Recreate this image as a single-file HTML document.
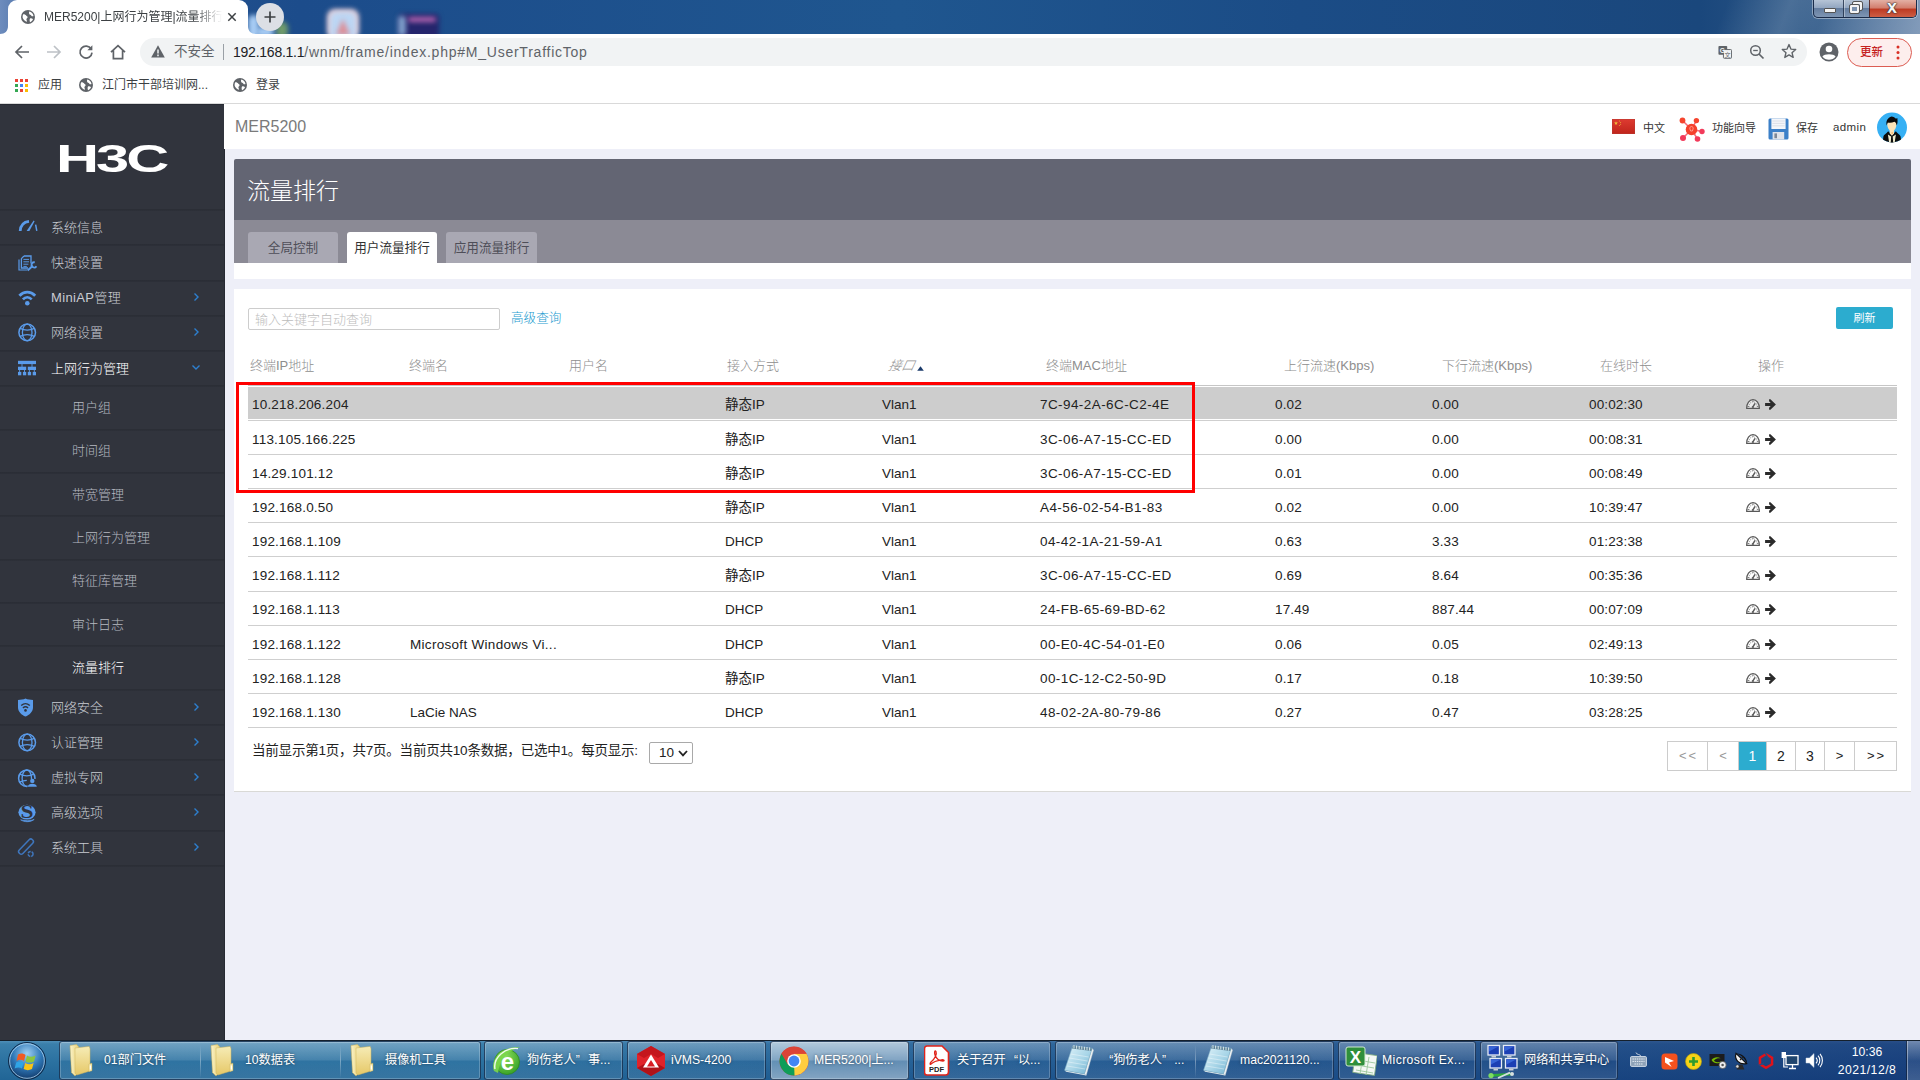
<!DOCTYPE html>
<html lang="zh-CN">
<head>
<meta charset="utf-8">
<title>MER5200|上网行为管理|流量排行</title>
<style>
*{box-sizing:border-box;margin:0;padding:0}
html,body{width:1920px;height:1080px;overflow:hidden;background:#eeeff8}
body{position:relative;font-family:"Liberation Sans","Noto Sans CJK SC",sans-serif;color:#222}
.abs{position:absolute}
.t{position:absolute;white-space:nowrap;line-height:16px}
svg{display:block}
/* ---------- window title bar ---------- */
#titlebar{position:absolute;left:0;top:0;width:1920px;height:34px;overflow:hidden;
 background:linear-gradient(90deg,#6d8cbd 0px,#27538f 60px,#1c4c8b 300px,#1f568f 900px,#1b4c86 1300px,#1a477c 1700px,#2a5585 1800px,#5f7fa6 1920px)}
#titlebar .blob{position:absolute;filter:blur(2.5px)}
#chrometab{position:absolute;left:8px;top:0px;width:240px;height:35px;background:#fff;border-radius:9px 9px 0 0}
#newtab{position:absolute;left:256px;top:3px;width:28px;height:28px;border-radius:14px;background:#dcdfe5}
#winbtn{position:absolute;left:1813px;top:0;width:104px;height:18px;border-radius:0 0 5px 5px;border:1px solid #1a2c4a;border-top:none;overflow:hidden;
 background:linear-gradient(180deg,#b6c4d6 0,#93a7c1 45%,#647d9f 50%,#7f96b4 100%);box-shadow:0 0 0 1px rgba(255,255,255,.4);z-index:2}
/* ---------- toolbar ---------- */
#toolbar{position:absolute;left:0;top:34px;width:1920px;height:36px;background:#fff}
#urlpill{position:absolute;left:140px;top:4px;width:1667px;height:28px;border-radius:14px;background:#f1f3f4}
#bookmarks{position:absolute;left:0;top:70px;width:1920px;height:34px;background:#fff;border-bottom:1px solid #d9d9d9}
#bookmarks .t{font-size:12px;color:#3c4043}
/* ---------- page ---------- */
#sidebar{position:absolute;left:0;top:104px;width:225px;height:936px;background:#31343d;border-right:1px solid #272a33;border-top:1px solid #272a33}
#sidebar .sep{position:absolute;left:0;width:224px;height:2px;background:linear-gradient(180deg,#2a2d35,#2d3039)}
#sidebar .mi{position:absolute;left:51px;font-size:13px;font-weight:300;color:#c9ccd3;line-height:16px;white-space:nowrap}
#sidebar .si{position:absolute;left:72px;font-size:13px;font-weight:300;color:#b6b9c1;line-height:16px;white-space:nowrap}
#sidebar .on{color:#fff}
#sidebar svg.ic{position:absolute;left:16px;width:22px;height:22px;overflow:visible}
#sidebar svg.ch{position:absolute;left:190.5px;width:10px;height:10px;overflow:visible}
#tophead{position:absolute;left:224px;top:104px;width:1696px;height:45px;background:#fff}
#tophead .t{font-size:11px;color:#333}
#phead{position:absolute;left:234px;top:159px;width:1677px;height:61px;background:#636573;border-radius:2px 2px 0 0}
#ptabs{position:absolute;left:234px;top:220px;width:1677px;height:43px;background:#8b8a95}
#ptabs .tab{position:absolute;top:12px;width:90px;height:33px;border-radius:3px 3px 0 0;background:#a9a8b3;color:#4e4e58;font-size:12.6px;line-height:32px;text-align:center;white-space:nowrap}
#ptabs .tab.on{background:#fff;color:#333}
#pstrip{position:absolute;left:234px;top:263px;width:1677px;height:16px;background:#fff}
#panel{position:absolute;left:234px;top:289px;width:1677px;height:503px;background:#fff;border-bottom:1px solid #d9d9d6}
#panel .th{position:absolute;top:69px;font-size:13px;font-weight:300;color:#8e8e8e;line-height:16px;white-space:nowrap}
#panel .ln{position:absolute;left:14px;width:1649px;height:1px;background:#cfcfcf}
#panel .td{position:absolute;font-size:13.5px;color:#222;line-height:16px;white-space:nowrap}
#panel .pg{position:absolute;top:452px;height:30px;border:1px solid #ccc;border-left:none;font-size:14px;line-height:28px;text-align:center;color:#222;background:#fff}
/* ---------- taskbar ---------- */
#taskbar{position:absolute;left:0;top:1040px;width:1920px;height:40px;
 background:linear-gradient(180deg,#4f8fb8 0,#3a7fab 3px,#2c72a1 50%,#216596 100%);border-top:1px solid #15202c}
#taskbar .tb{position:absolute;top:0px;height:39px;border:1px solid rgba(20,40,70,.75);border-radius:3px;
 background:linear-gradient(180deg,rgba(255,255,255,.28) 0,rgba(255,255,255,.12) 48%,rgba(255,255,255,.02) 52%,rgba(255,255,255,.10) 100%);box-shadow:inset 0 0 0 1px rgba(255,255,255,.22)}
#taskbar .tb.act{background:linear-gradient(180deg,rgba(255,255,255,.62) 0,rgba(255,255,255,.42) 48%,rgba(255,255,255,.28) 52%,rgba(255,255,255,.45) 100%)}
#taskbar .lbl{position:absolute;top:11px;font-size:12.2px;color:#fff;line-height:16px;white-space:nowrap;text-shadow:0 0 3px rgba(0,0,0,.5)}
#taskbar .ql{display:inline-block;width:1em;text-align:right}
#taskbar .qr{display:inline-block;width:1em;text-align:left}
#panel .ip{letter-spacing:0.2px}
#panel .mac{letter-spacing:0.42px}
#panel .up,#panel .dn,#panel .tm{letter-spacing:0.15px}
#taskbar .tint{position:absolute;left:0;top:0;width:1920px;height:39px;background:linear-gradient(90deg,rgba(20,50,130,0) 0,rgba(20,50,130,0) 480px,rgba(20,45,120,.28) 1000px,rgba(15,35,105,.5) 1600px,rgba(12,30,100,.58) 1920px)}
#foot{letter-spacing:-0.2px}
#panel .nm{letter-spacing:0.3px}
#panel .nm.s{letter-spacing:0}

</style>
</head>
<body>
<div id="titlebar">
<div class="blob" style="left:327px;top:9px;width:32px;height:30px;background:#e6cdd6;border-radius:8px"></div>
<div class="blob" style="left:330px;top:12px;width:26px;height:28px;background:#bcd6f4;border-radius:6px"></div>
<svg class="blob" style="left:334px;top:17px;width:18px;height:18px" viewBox="0 0 18 18"><path d="M9 2 L16 18 H2 Z" fill="#dc8f98"/></svg>
<div class="blob" style="left:399px;top:14px;width:40px;height:24px;background:#25256c;border-radius:4px"></div>
<div class="blob" style="left:398px;top:16px;width:8px;height:20px;background:#7fa0cc;border-radius:3px"></div>
<div class="blob" style="left:408px;top:17px;width:28px;height:5px;background:#b565b0;border-radius:3px"></div>
<div class="blob" style="left:276px;top:22px;width:12px;height:16px;background:#6f9a6a;border-radius:5px"></div>
<div class="blob" style="left:248px;top:15px;width:11px;height:24px;background:#a8cdf5;border-radius:5px"></div>
<div class="blob" style="left:256px;top:27px;width:18px;height:10px;background:#a8cdf5;border-radius:5px"></div>
<svg class="abs" style="left:0;top:26px;width:8px;height:8px" viewBox="0 0 8 8"><path d="M0 8 H8 V0 C8 5 5 8 0 8 Z" fill="#fff"/></svg>
<svg class="abs" style="left:248px;top:26px;width:8px;height:8px" viewBox="0 0 8 8"><path d="M8 8 H0 V0 C0 5 3 8 8 8 Z" fill="#fff"/></svg>
<div id="chrometab"></div>
<svg class="abs" style="left:21px;top:10px;width:14px;height:14px" viewBox="0 0 14 14"><circle cx="7" cy="7" r="7" fill="#5f6368"/><path d="M2.2 4.2 C3.5 4 4.6 4.6 5.2 5.6 C5.6 6.4 6.6 6.2 6.6 7.2 C6.6 8.2 5.4 8.2 5.4 9.2 C5.4 10.2 6.2 10.6 6 11.8 C4 11.4 2.2 9.8 1.6 7.6 C1.5 6.4 1.7 5.2 2.2 4.2 Z" fill="#fff"/><path d="M8.2 1.6 C10.4 2 12.2 3.8 12.5 6 C11.6 6.6 10.6 6.2 10.2 5.4 C9.8 4.6 8.6 4.8 8.2 4 C7.8 3.2 8 2.4 8.2 1.6 Z" fill="#fff"/><path d="M9 8.4 C10 8 11.4 8.4 12 9.2 C11.4 10.6 10.4 11.6 9 12.2 C8.6 11 8.4 9.4 9 8.4 Z" fill="#fff"/></svg>
<div class="t" style="left:44px;top:9px;font-size:12px;color:#3c4043;width:180px;overflow:hidden;-webkit-mask-image:linear-gradient(90deg,#000 150px,transparent 178px);mask-image:linear-gradient(90deg,#000 150px,transparent 178px)">MER5200|上网行为管理|流量排行</div>
<svg class="abs" style="left:227px;top:12px;width:10px;height:10px" viewBox="0 0 10 10"><path d="M1.3 1.3 L8.7 8.7 M8.7 1.3 L1.3 8.7" stroke="#3c4043" stroke-width="1.5"/></svg>
<div id="newtab"></div>
<svg class="abs" style="left:264px;top:11px;width:12px;height:12px" viewBox="0 0 12 12"><path d="M6 0.5 V11.5 M0.5 6 H11.5" stroke="#3c4043" stroke-width="1.7"/></svg>
<div id="winbtn"><div class="abs" style="left:29px;top:0;width:1px;height:18px;background:rgba(30,45,70,.8);box-shadow:1px 0 0 rgba(255,255,255,.35)"></div><div class="abs" style="left:55px;top:0;width:48px;height:18px;background:linear-gradient(180deg,#e3b0a4 0,#d27d6c 45%,#bd3a22 50%,#cf6248 100%);border-left:1px solid rgba(60,25,25,.8)"></div><div class="abs" style="left:10px;top:8px;width:12px;height:5px;background:#f4f4f4;border:1px solid #555;border-radius:1px"></div><div class="abs" style="left:39px;top:2px;width:9px;height:8px;border:2px solid #f4f4f4;outline:1px solid #555;border-radius:1px"></div><div class="abs" style="left:36px;top:5px;width:9px;height:8px;border:2px solid #f4f4f4;outline:1px solid #555;border-radius:1px;background:#7d93b0"></div><div class="t" style="left:73px;top:-2px;font-size:18px;font-weight:bold;color:#f6f6f6;line-height:18px;text-shadow:0 0 1px #333,0 0 1px #333,0 0 2px #333">x</div></div>
<div class="abs" style="left:1560px;top:0;width:360px;height:34px;background:linear-gradient(112deg,rgba(255,255,255,0) 45%,rgba(255,255,255,.16) 62%,rgba(255,255,255,.07) 72%,rgba(255,255,255,.22) 100%)"></div>
</div>
<div id="toolbar"><div id="urlpill"></div>
<svg class="abs" style="left:14px;top:10px;width:16px;height:16px" viewBox="0 0 16 16"><path d="M15 8 H2.5 M8 2 L2 8 L8 14" fill="none" stroke="#5f6368" stroke-width="1.7"/></svg>
<svg class="abs" style="left:46px;top:10px;width:16px;height:16px" viewBox="0 0 16 16"><path d="M1 8 H13.5 M8 2 L14 8 L8 14" fill="none" stroke="#bdc1c6" stroke-width="1.7"/></svg>
<svg class="abs" style="left:78px;top:10px;width:16px;height:16px" viewBox="0 0 16 16"><path d="M13.2 5 A6 6 0 1 0 14 8.6" fill="none" stroke="#5f6368" stroke-width="1.7"/><path d="M14.4 1.2 V6.2 H9.4 Z" fill="#5f6368"/></svg>
<svg class="abs" style="left:110px;top:10px;width:16px;height:16px" viewBox="0 0 16 16"><path d="M1 8.2 L8 1.6 L15 8.2 M3.4 6.4 V14.6 H12.6 V6.4" fill="none" stroke="#5f6368" stroke-width="1.7"/></svg>
<svg class="abs" style="left:151px;top:11px;width:14px;height:13px" viewBox="0 0 14 13"><path d="M7 0.3 L13.8 12.6 H0.2 Z" fill="#5f6368"/><path d="M7 4.4 V8.4 M7 9.6 V11.2" stroke="#f1f3f4" stroke-width="1.5"/></svg>
<div class="t" style="left:174px;top:10px;font-size:13.5px;color:#5f6368">不安全</div>
<div class="abs" style="left:223px;top:10px;width:1px;height:16px;background:#9aa0a6"></div>
<div class="t" id="urltxt" style="left:233px;top:9px;font-size:14px;color:#5f6368;line-height:18px;letter-spacing:0.76px"><span style="color:#202124;letter-spacing:-0.24px">192.168.1.1</span>/wnm/frame/index.php#M_UserTrafficTop</div>
<svg class="abs" style="left:1718px;top:11px;width:14px;height:14px" viewBox="0 0 16 16"><rect x="0.5" y="1" width="10" height="10" rx="1" fill="#5f6368"/><rect x="6.2" y="5.2" width="9.3" height="10" rx="1" fill="#f1f3f4" stroke="#5f6368" stroke-width="1.1"/><text x="5" y="9" text-anchor="middle" font-family="Liberation Sans, sans-serif" font-weight="bold" font-size="7.5" fill="#f1f3f4">G</text><text x="11" y="13.6" text-anchor="middle" font-family="Liberation Sans, Noto Sans CJK SC, sans-serif" font-size="7" fill="#5f6368">文</text></svg>
<svg class="abs" style="left:1749px;top:10px;width:16px;height:16px" viewBox="0 0 16 16"><circle cx="6.5" cy="6.5" r="4.8" fill="none" stroke="#5f6368" stroke-width="1.5"/><path d="M10 10 L14.5 14.5" stroke="#5f6368" stroke-width="1.7"/><path d="M4.2 6.5 H8.8" stroke="#5f6368" stroke-width="1.3"/></svg>
<svg class="abs" style="left:1781px;top:9px;width:16px;height:16px" viewBox="0 0 16 16"><path d="M8 1.6 L9.9 6.1 L14.7 6.5 L11 9.7 L12.2 14.4 L8 11.9 L3.8 14.4 L5 9.7 L1.3 6.5 L6.1 6.1 Z" fill="none" stroke="#5f6368" stroke-width="1.4" stroke-linejoin="round"/></svg>
<svg class="abs" style="left:1819px;top:8px;width:20px;height:20px" viewBox="0 0 20 20"><circle cx="10" cy="10" r="9.5" fill="#5f6368"/><circle cx="10" cy="7" r="3.3" fill="#fff"/><path d="M3.4 14.6 C5.2 11.6 14.8 11.6 16.6 14.6 C15 16.8 12.6 17.8 10 17.8 C7.4 17.8 5 16.8 3.4 14.6 Z" fill="#fff"/></svg>
<div class="abs" style="left:1847px;top:4px;width:65px;height:29px;border-radius:15px;border:1px solid #dc5d53;background:#fdeeed"></div>
<div class="t" style="left:1860px;top:10px;font-size:11.5px;color:#c5221f;font-weight:500">更新</div>
<svg class="abs" style="left:1896px;top:11px;width:4px;height:16px" viewBox="0 0 4 16"><circle cx="2" cy="2" r="1.5" fill="#d93025"/><circle cx="2" cy="7.5" r="1.5" fill="#d93025"/><circle cx="2" cy="13" r="1.5" fill="#d93025"/></svg>
</div>
<div id="bookmarks">
<svg class="abs" style="left:15px;top:9px;width:13px;height:13px" viewBox="0 0 13 13"><rect x="0" y="0" width="3" height="3" fill="#ea4335"/><rect x="5" y="0" width="3" height="3" fill="#ea4335"/><rect x="10" y="0" width="3" height="3" fill="#ea4335"/><rect x="0" y="5" width="3" height="3" fill="#34a853"/><rect x="5" y="5" width="3" height="3" fill="#4285f4"/><rect x="10" y="5" width="3" height="3" fill="#fbbc04"/><rect x="0" y="10" width="3" height="3" fill="#34a853"/><rect x="5" y="10" width="3" height="3" fill="#ea4335"/><rect x="10" y="10" width="3" height="3" fill="#fbbc04"/></svg>
<div class="t" style="left:38px;top:7px">应用</div>
<svg class="abs" style="left:79px;top:8px;width:14px;height:14px" viewBox="0 0 14 14"><circle cx="7" cy="7" r="7" fill="#5f6368"/><path d="M2.2 4.2 C3.5 4 4.6 4.6 5.2 5.6 C5.6 6.4 6.6 6.2 6.6 7.2 C6.6 8.2 5.4 8.2 5.4 9.2 C5.4 10.2 6.2 10.6 6 11.8 C4 11.4 2.2 9.8 1.6 7.6 C1.5 6.4 1.7 5.2 2.2 4.2 Z" fill="#fff"/><path d="M8.2 1.6 C10.4 2 12.2 3.8 12.5 6 C11.6 6.6 10.6 6.2 10.2 5.4 C9.8 4.6 8.6 4.8 8.2 4 C7.8 3.2 8 2.4 8.2 1.6 Z" fill="#fff"/><path d="M9 8.4 C10 8 11.4 8.4 12 9.2 C11.4 10.6 10.4 11.6 9 12.2 C8.6 11 8.4 9.4 9 8.4 Z" fill="#fff"/></svg>
<div class="t" style="left:102px;top:7px">江门市干部培训网...</div>
<svg class="abs" style="left:233px;top:8px;width:14px;height:14px" viewBox="0 0 14 14"><circle cx="7" cy="7" r="7" fill="#5f6368"/><path d="M2.2 4.2 C3.5 4 4.6 4.6 5.2 5.6 C5.6 6.4 6.6 6.2 6.6 7.2 C6.6 8.2 5.4 8.2 5.4 9.2 C5.4 10.2 6.2 10.6 6 11.8 C4 11.4 2.2 9.8 1.6 7.6 C1.5 6.4 1.7 5.2 2.2 4.2 Z" fill="#fff"/><path d="M8.2 1.6 C10.4 2 12.2 3.8 12.5 6 C11.6 6.6 10.6 6.2 10.2 5.4 C9.8 4.6 8.6 4.8 8.2 4 C7.8 3.2 8 2.4 8.2 1.6 Z" fill="#fff"/><path d="M9 8.4 C10 8 11.4 8.4 12 9.2 C11.4 10.6 10.4 11.6 9 12.2 C8.6 11 8.4 9.4 9 8.4 Z" fill="#fff"/></svg>
<div class="t" style="left:256px;top:7px">登录</div>
</div>
<div id="sidebar"><div class="abs" style="left:0;top:-1px;width:224px;height:1px">
<svg class="abs" style="left:50px;top:34px;width:130px;height:40px;overflow:visible" viewBox="0 0 130 40"><text x="0" y="0" transform="translate(6,34) scale(1.53,1)" font-family="Liberation Sans, sans-serif" font-weight="bold" font-size="39" fill="#fff" letter-spacing="-2">H3C</text></svg>
<div class="sep" style="top:105px"></div>
<div class="sep" style="top:140px"></div>
<div class="sep" style="top:176px"></div>
<div class="sep" style="top:211px"></div>
<div class="sep" style="top:246px"></div>
<div class="sep" style="top:281px"></div>
<div class="sep" style="top:325px"></div>
<div class="sep" style="top:368px"></div>
<div class="sep" style="top:411px"></div>
<div class="sep" style="top:455px"></div>
<div class="sep" style="top:498px"></div>
<div class="sep" style="top:541px"></div>
<div class="sep" style="top:585px"></div>
<div class="sep" style="top:620px"></div>
<div class="sep" style="top:655px"></div>
<div class="sep" style="top:690px"></div>
<div class="sep" style="top:726px"></div>
<div class="sep" style="top:761px"></div>
<svg class="ic" style="top:112px" viewBox="0 0 22 22"><path d="M4.2 15 C4.6 9.4 8 6 13 5.4" fill="none" stroke="#5a9bea" stroke-width="2.8"/><path d="M10.6 15 L17.6 4.6 L18.6 5.2 L13.4 15 Z" fill="#5a9bea"/><path d="M19.6 8.6 L20.8 14.8" stroke="#5a9bea" stroke-width="1.5"/></svg>
<div class="mi" style="top:116px">系统信息</div>
<svg class="ic" style="top:147px" viewBox="0 0 22 22"><path d="M3 8.6 V19 H11" fill="none" stroke="#5a9bea" stroke-width="1.2"/><path d="M8 5 H15 V12.6 M5.4 7.6 V17 H12 M5.4 7.6 L8 5" fill="none" stroke="#5a9bea" stroke-width="1.3"/><path d="M7.4 8.4 H13 M7.4 10.8 H13 M7.4 13.2 H12.4 M7.4 15.4 H10.8" stroke="#5a9bea" stroke-width="0.95"/><path d="M11.6 19.6 L16.8 14.8" stroke="#5a9bea" stroke-width="2"/><path d="M18.8 11.4 a2.6 2.6 0 1 0 1.6 3.8" fill="none" stroke="#5a9bea" stroke-width="1.8"/></svg>
<div class="mi" style="top:151px">快速设置</div>
<svg class="ic" style="top:182px" viewBox="0 0 22 22"><path d="M3.4 9.8 C8 4.8 14.6 4.8 19.2 9.8" fill="none" stroke="#5a9bea" stroke-width="2.8"/><path d="M6.9 13.4 C9.5 10.6 13.1 10.6 15.7 13.4" fill="none" stroke="#5a9bea" stroke-width="2.6"/><circle cx="11.3" cy="17.2" r="2.3" fill="#5a9bea"/></svg>
<div class="mi" style="top:186px;letter-spacing:0.35px">MiniAP管理</div>
<svg class="ch" style="top:188px" viewBox="0 0 10 10"><path d="M3.5 1.5 L7 5 L3.5 8.5" fill="none" stroke="#2d7fd0" stroke-width="1.4"/></svg>
<svg class="ic" style="top:217px" viewBox="0 0 22 22"><circle cx="11.2" cy="11.4" r="8.3" fill="none" stroke="#5a9bea" stroke-width="1.5"/><ellipse cx="11.2" cy="11.4" rx="4.8" ry="8.3" fill="none" stroke="#5a9bea" stroke-width="1.3"/><path d="M4 7.4 C8.2 9.4 14.2 9.4 18.4 7.4 M4 15.4 C8.2 13.4 14.2 13.4 18.4 15.4" fill="none" stroke="#5a9bea" stroke-width="1.3"/></svg>
<div class="mi" style="top:221px">网络设置</div>
<svg class="ch" style="top:223px" viewBox="0 0 10 10"><path d="M3.5 1.5 L7 5 L3.5 8.5" fill="none" stroke="#2d7fd0" stroke-width="1.4"/></svg>
<svg class="ic" style="top:253px" viewBox="0 0 22 22"><rect x="2" y="3.8" width="18" height="3.3" fill="#5a9bea"/><rect x="2" y="9.7" width="8.2" height="3.3" fill="#5a9bea"/><rect x="11.8" y="9.7" width="8.2" height="3.3" fill="#5a9bea"/><rect x="2" y="14.9" width="3.3" height="3.4" fill="#5a9bea"/><rect x="6.9" y="14.9" width="3.3" height="3.4" fill="#5a9bea"/><rect x="11.8" y="14.9" width="3.3" height="3.4" fill="#5a9bea"/><rect x="16.7" y="14.9" width="3.3" height="3.4" fill="#5a9bea"/><path d="M6 7 V10 M16 7 V10 M3.6 13 V15 M8.5 13 V15 M13.4 13 V15 M18.3 13 V15" stroke="#5a9bea" stroke-width="0.9"/></svg>
<div class="mi on" style="top:257px">上网行为管理</div>
<svg class="ch" style="top:258px" viewBox="0 0 10 10"><path d="M1.5 3.5 L5 7 L8.5 3.5" fill="none" stroke="#2d7fd0" stroke-width="1.4"/></svg>
<svg class="ic" style="top:592px" viewBox="0 0 22 22"><path d="M9.5 2.6 C11.6 3.6 14.4 4 17 4 V11.4 C17 15.8 13.4 18.8 9.5 20.6 C5.6 18.8 2 15.8 2 11.4 V4 C4.6 4 7.4 3.6 9.5 2.6 Z" fill="#5a9bea"/><path d="M5.2 9.6 C7.8 7.2 11.2 7.2 13.8 9.6 M6.9 12 C8.6 10.5 10.4 10.5 12.1 12" fill="none" stroke="#31343d" stroke-width="1.4"/><circle cx="9.5" cy="14.4" r="1.3" fill="#31343d"/></svg>
<div class="mi" style="top:596px">网络安全</div>
<svg class="ch" style="top:598px" viewBox="0 0 10 10"><path d="M3.5 1.5 L7 5 L3.5 8.5" fill="none" stroke="#2d7fd0" stroke-width="1.4"/></svg>
<svg class="ic" style="top:627px" viewBox="0 0 22 22"><circle cx="11.2" cy="11.4" r="8.3" fill="none" stroke="#5a9bea" stroke-width="1.5"/><ellipse cx="11.2" cy="11.4" rx="4.8" ry="8.3" fill="none" stroke="#5a9bea" stroke-width="1.3"/><path d="M4 7.4 C8.2 9.4 14.2 9.4 18.4 7.4 M4 15.4 C8.2 13.4 14.2 13.4 18.4 15.4" fill="none" stroke="#5a9bea" stroke-width="1.3"/></svg>
<div class="mi" style="top:631px">认证管理</div>
<svg class="ch" style="top:633px" viewBox="0 0 10 10"><path d="M3.5 1.5 L7 5 L3.5 8.5" fill="none" stroke="#2d7fd0" stroke-width="1.4"/></svg>
<svg class="ic" style="top:662px" viewBox="0 0 22 22"><circle cx="10.8" cy="12.2" r="8.2" fill="none" stroke="#5a9bea" stroke-width="1.5"/><ellipse cx="10.8" cy="12.2" rx="4.7" ry="8.2" fill="none" stroke="#5a9bea" stroke-width="1.3"/><path d="M3.6 8.2 C7.8 10.2 13.8 10.2 18 8.2 M3.6 16.2 C6 15 8.4 14.4 10.8 14.3" fill="none" stroke="#5a9bea" stroke-width="1.3"/><rect x="11.6" y="13" width="10.5" height="9" fill="#31343d"/><circle cx="16.3" cy="14.9" r="2.2" fill="#5a9bea"/><path d="M11.8 20.8 C11.8 16.6 20.8 16.6 20.8 20.8 Z" fill="#5a9bea"/></svg>
<div class="mi" style="top:666px">虚拟专网</div>
<svg class="ch" style="top:668px" viewBox="0 0 10 10"><path d="M3.5 1.5 L7 5 L3.5 8.5" fill="none" stroke="#2d7fd0" stroke-width="1.4"/></svg>
<svg class="ic" style="top:697px" viewBox="0 0 22 22"><ellipse cx="11" cy="11.2" rx="8.6" ry="7.4" fill="#5a9bea"/><path d="M4.6 18.8 C8.6 21.4 14.4 21.4 18.2 18.4 C15 20 8.6 20.1 4.6 18.8 Z" fill="#5a9bea" stroke="#5a9bea" stroke-width="0.7"/><text x="0" y="0" transform="translate(11,17.4) scale(1.3,1)" text-anchor="middle" font-family="Liberation Serif, serif" font-weight="bold" font-size="18" fill="#31343d">S</text></svg>
<div class="mi" style="top:701px">高级选项</div>
<svg class="ch" style="top:703px" viewBox="0 0 10 10"><path d="M3.5 1.5 L7 5 L3.5 8.5" fill="none" stroke="#2d7fd0" stroke-width="1.4"/></svg>
<svg class="ic" style="top:732px" viewBox="0 0 22 22"><rect x="-2.5" y="-9.4" width="5" height="18.8" rx="2.3" transform="translate(10,10.6) rotate(44)" fill="none" stroke="#3f76bd" stroke-width="1.5"/><circle cx="14.6" cy="18" r="2.5" fill="none" stroke="#3f76bd" stroke-width="1.5" stroke-dasharray="3.2 1"/></svg>
<div class="mi" style="top:736px">系统工具</div>
<svg class="ch" style="top:738px" viewBox="0 0 10 10"><path d="M3.5 1.5 L7 5 L3.5 8.5" fill="none" stroke="#2d7fd0" stroke-width="1.4"/></svg>
<div class="si" style="top:296px">用户组</div>
<div class="si" style="top:339px">时间组</div>
<div class="si" style="top:383px">带宽管理</div>
<div class="si" style="top:426px">上网行为管理</div>
<div class="si" style="top:469px">特征库管理</div>
<div class="si" style="top:513px">审计日志</div>
<div class="si on" style="top:556px">流量排行</div>
</div></div>
<div id="tophead">
<div class="t" style="left:11px;top:14px;font-size:16px;color:#7a7a7a;line-height:18px;letter-spacing:0px">MER5200</div>
<svg class="abs" style="left:1388px;top:15px;width:23px;height:15px" viewBox="0 0 23 15"><defs><linearGradient id="fg" x1="0" y1="0" x2="0" y2="1"><stop offset="0" stop-color="#de3b31"/><stop offset="1" stop-color="#bf241b"/></linearGradient></defs><rect width="23" height="15" fill="url(#fg)"/><rect x="0.25" y="0.25" width="22.5" height="14.5" fill="none" stroke="#b83a32" stroke-width="0.5"/><path d="M4 2.2 L4.5 3.6 L6 3.6 L4.8 4.5 L5.2 5.9 L4 5 L2.8 5.9 L3.2 4.5 L2 3.6 L3.5 3.6 Z" fill="#f0c23a"/><circle cx="7.4" cy="2" r="0.5" fill="#e8b438"/><circle cx="8.6" cy="3.4" r="0.5" fill="#e8b438"/><circle cx="8.6" cy="5.2" r="0.5" fill="#e8b438"/><circle cx="7.4" cy="6.6" r="0.5" fill="#e8b438"/></svg>
<div class="t" style="left:1419px;top:16px">中文</div>
<svg class="abs" style="left:1454px;top:13px;width:27px;height:26px" viewBox="0 0 27 26"><g stroke="#f76a78" stroke-width="1.5"><path d="M13.5 12.5 L4.5 3.5 M13.5 12.5 L18.4 3.6 M13.5 12.5 L24 14.5 M13.5 12.5 L19.5 22 M13.5 12.5 L5 21"/></g><circle cx="13.5" cy="12.5" r="5.8" fill="#f5402c"/><path d="M11.9 11.8 a1.7 1.7 0 1 1 3.2 0 L14.4 14 H12.6 Z" fill="none" stroke="#ffb0a2" stroke-width="0.8"/><circle cx="4.5" cy="3.5" r="2.9" fill="#f5452e"/><circle cx="18.4" cy="3.6" r="2.7" fill="#f5452e"/><circle cx="24" cy="14.5" r="2.7" fill="#f23a5a"/><circle cx="19.5" cy="22" r="2.8" fill="#f23a5a"/><circle cx="5" cy="21" r="3" fill="#f23a5a"/></svg>
<div class="t" style="left:1488px;top:16px">功能向导</div>
<svg class="abs" style="left:1544px;top:14px;width:21px;height:22px" viewBox="0 0 21 22"><rect x="0.5" y="0.5" width="20" height="21" rx="1.5" fill="#3c80c8"/><rect x="3.4" y="0.5" width="14.2" height="10.5" fill="#f4f6fa"/><path d="M4.4 3 H16.6 M4.4 5.4 H16.6 M4.4 7.8 H16.6" stroke="#d4d9e2" stroke-width="0.8"/><rect x="4.6" y="14" width="11.6" height="7.5" fill="#dfe3ea"/><rect x="6.4" y="15.4" width="2.6" height="4.8" fill="#7d8796"/></svg>
<div class="t" style="left:1572px;top:16px">保存</div>
<div class="t" style="left:1609px;top:15px;font-size:11.5px;letter-spacing:0.4px">admin</div>
<svg class="abs" style="left:1653px;top:8px;width:30px;height:31px" viewBox="0 0 30 31"><defs><clipPath id="avc"><circle cx="15" cy="15.5" r="15"/></clipPath></defs><circle cx="15" cy="15.5" r="15" fill="#36b0f4"/><g clip-path="url(#avc)"><path d="M5.6 31 L6.4 24.4 C6.8 22.6 9 21.8 11.2 19.2 L14.9 23.2 L18.8 19.2 C21 21.8 23 22.6 23.6 24.4 L24.4 31 Z" fill="#0c0c0c"/><path d="M10.9 22.4 L14.9 25 L18.9 22.4 L17.6 31 H12.2 Z" fill="#f1edcf"/><path d="M14.2 24.2 H15.7 L16.2 31 H13.7 Z" fill="#0c0c0c"/><path d="M12.8 17.6 H17 V21.4 L14.9 23.8 L12.8 21.4 Z" fill="#fbe2b6"/><path d="M10.2 12 C10.2 9.4 12 8.6 14.9 8.6 C17.8 8.6 19.5 9.4 19.5 12 C19.5 15.6 18 18.6 14.9 20.1 C11.8 18.6 10.2 15.6 10.2 12 Z" fill="#fde3b7"/><path d="M9.8 13.6 C8.4 8.8 10.8 5.8 14.5 4.5 C16.4 4.9 18 5.6 19 6.8 L20.3 6.1 C20.8 8.8 20.6 11.4 19.8 13.6 C19.4 11.4 18.6 10.2 17.4 9.7 C15.2 10.8 12.4 10.9 10.8 10.4 C10.2 11.4 10 12.4 9.8 13.6 Z" fill="#090909"/><circle cx="15.1" cy="21" r="0.75" fill="#f5a04a"/></g></svg>
</div>
<div id="phead"><div class="t" style="left:13px;top:18px;font-size:23px;color:#fff;line-height:28px;font-weight:300">流量排行</div></div>
<div id="ptabs"><div class="tab" style="left:14px">全局控制</div><div class="tab on" style="left:113px">用户流量排行</div><div class="tab" style="left:212px;width:91px">应用流量排行</div></div>
<div id="pstrip"></div>
<div id="panel">
<div class="abs" style="left:14px;top:19px;width:252px;height:22px;border:1px solid #cdcdcd;border-radius:2px;background:#fff"></div>
<div class="t" style="left:21px;top:23px;font-size:13px;font-weight:300;color:#bcbcbc">输入关键字自动查询</div>
<div class="t" style="left:277px;top:21px;font-size:12.6px;font-weight:300;color:#1b9bd0">高级查询</div>
<div class="abs" style="left:1602px;top:18px;width:57px;height:22px;background:#2caccf;border-radius:2px;color:#fff;font-size:11px;line-height:22px;text-align:center">刷新</div>
<div class="th" style="left:16px">终端IP地址</div>
<div class="th" style="left:175px">终端名</div>
<div class="th" style="left:335px">用户名</div>
<div class="th" style="left:493px">接入方式</div>
<div class="th" style="left:812px">终端MAC地址</div>
<div class="th" style="left:1050px">上行流速(Kbps)</div>
<div class="th" style="left:1208px">下行流速(Kbps)</div>
<div class="th" style="left:1366px">在线时长</div>
<div class="th" style="left:1524px">操作</div>
<div class="th" style="left:653px;font-style:italic;color:#8e8e8e;transform:skewX(-12deg);transform-origin:0 100%">接口</div>
<svg class="abs" style="left:683px;top:77px;width:7px;height:5px" viewBox="0 0 7 5"><path d="M3.5 0.3 L6.8 4.8 H0.2 Z" fill="#1a3a6a"/></svg>
<div class="ln" style="top:96px;background:#c6c6c6"></div>
<div class="abs" style="left:14px;top:98px;width:1649px;height:32px;background:#cdcdcd"></div>
<div class="ln" style="top:131px"></div>
<div class="ln" style="top:165px"></div>
<div class="ln" style="top:199px"></div>
<div class="ln" style="top:233px"></div>
<div class="ln" style="top:267px"></div>
<div class="ln" style="top:302px"></div>
<div class="ln" style="top:336px"></div>
<div class="ln" style="top:370px"></div>
<div class="ln" style="top:404px"></div>
<div class="ln" style="top:438px"></div>
<div class="td ip" style="left:18px;top:108px">10.218.206.204</div>
<div class="td md" style="left:491px;top:108px">静态IP</div>
<div class="td vl" style="left:648px;top:108px">Vlan1</div>
<div class="td mac" style="left:806px;top:108px">7C-94-2A-6C-C2-4E</div>
<div class="td up" style="left:1041px;top:108px">0.02</div>
<div class="td dn" style="left:1198px;top:108px">0.00</div>
<div class="td tm" style="left:1355px;top:108px">00:02:30</div>
<svg class="abs" style="left:1512px;top:110px;width:14px;height:10px" viewBox="0 0 14 10"><path d="M0.7 9.4 C0.6 4 3.4 0.7 7 0.7 C10.6 0.7 13.4 4 13.3 9.4 Z" fill="rgba(255,255,255,.6)" stroke="#585858" stroke-width="1.25" stroke-linejoin="round"/><path d="M2.9 8 C2.9 4.6 4.8 2.9 7 2.9 C9.2 2.9 11.1 4.6 11.1 8" fill="none" stroke="#8a8a8a" stroke-width="1" stroke-dasharray="0.9 1.1"/><path d="M1.6 7.5 H2.9 M11.1 7.5 H12.4 M7 1.4 V3" stroke="#666" stroke-width="0.8"/><path d="M6.6 8.4 L9.1 4.4" stroke="#5a5a5a" stroke-width="1.5"/><circle cx="6.8" cy="8" r="1.1" fill="#666"/></svg>
<svg class="abs" style="left:1531px;top:110px;width:11px;height:11px" viewBox="0 0 11 11"><path d="M4.1 0.2 L5.4 0.2 L10.9 5.5 L5.4 10.8 L4.1 10.8 L4.1 8.7 L5.7 7 L0.1 7 L0.1 4 L5.7 4 L4.1 2.3 Z" fill="#2b2b2b"/></svg>
<div class="td ip" style="left:18px;top:142.5px">113.105.166.225</div>
<div class="td md" style="left:491px;top:142.5px">静态IP</div>
<div class="td vl" style="left:648px;top:142.5px">Vlan1</div>
<div class="td mac" style="left:806px;top:142.5px">3C-06-A7-15-CC-ED</div>
<div class="td up" style="left:1041px;top:142.5px">0.00</div>
<div class="td dn" style="left:1198px;top:142.5px">0.00</div>
<div class="td tm" style="left:1355px;top:142.5px">00:08:31</div>
<svg class="abs" style="left:1512px;top:145px;width:14px;height:10px" viewBox="0 0 14 10"><path d="M0.7 9.4 C0.6 4 3.4 0.7 7 0.7 C10.6 0.7 13.4 4 13.3 9.4 Z" fill="rgba(255,255,255,.6)" stroke="#585858" stroke-width="1.25" stroke-linejoin="round"/><path d="M2.9 8 C2.9 4.6 4.8 2.9 7 2.9 C9.2 2.9 11.1 4.6 11.1 8" fill="none" stroke="#8a8a8a" stroke-width="1" stroke-dasharray="0.9 1.1"/><path d="M1.6 7.5 H2.9 M11.1 7.5 H12.4 M7 1.4 V3" stroke="#666" stroke-width="0.8"/><path d="M6.6 8.4 L9.1 4.4" stroke="#5a5a5a" stroke-width="1.5"/><circle cx="6.8" cy="8" r="1.1" fill="#666"/></svg>
<svg class="abs" style="left:1531px;top:145px;width:11px;height:11px" viewBox="0 0 11 11"><path d="M4.1 0.2 L5.4 0.2 L10.9 5.5 L5.4 10.8 L4.1 10.8 L4.1 8.7 L5.7 7 L0.1 7 L0.1 4 L5.7 4 L4.1 2.3 Z" fill="#2b2b2b"/></svg>
<div class="td ip" style="left:18px;top:176.5px">14.29.101.12</div>
<div class="td md" style="left:491px;top:176.5px">静态IP</div>
<div class="td vl" style="left:648px;top:176.5px">Vlan1</div>
<div class="td mac" style="left:806px;top:176.5px">3C-06-A7-15-CC-ED</div>
<div class="td up" style="left:1041px;top:176.5px">0.01</div>
<div class="td dn" style="left:1198px;top:176.5px">0.00</div>
<div class="td tm" style="left:1355px;top:176.5px">00:08:49</div>
<svg class="abs" style="left:1512px;top:179px;width:14px;height:10px" viewBox="0 0 14 10"><path d="M0.7 9.4 C0.6 4 3.4 0.7 7 0.7 C10.6 0.7 13.4 4 13.3 9.4 Z" fill="rgba(255,255,255,.6)" stroke="#585858" stroke-width="1.25" stroke-linejoin="round"/><path d="M2.9 8 C2.9 4.6 4.8 2.9 7 2.9 C9.2 2.9 11.1 4.6 11.1 8" fill="none" stroke="#8a8a8a" stroke-width="1" stroke-dasharray="0.9 1.1"/><path d="M1.6 7.5 H2.9 M11.1 7.5 H12.4 M7 1.4 V3" stroke="#666" stroke-width="0.8"/><path d="M6.6 8.4 L9.1 4.4" stroke="#5a5a5a" stroke-width="1.5"/><circle cx="6.8" cy="8" r="1.1" fill="#666"/></svg>
<svg class="abs" style="left:1531px;top:179px;width:11px;height:11px" viewBox="0 0 11 11"><path d="M4.1 0.2 L5.4 0.2 L10.9 5.5 L5.4 10.8 L4.1 10.8 L4.1 8.7 L5.7 7 L0.1 7 L0.1 4 L5.7 4 L4.1 2.3 Z" fill="#2b2b2b"/></svg>
<div class="td ip" style="left:18px;top:210.5px">192.168.0.50</div>
<div class="td md" style="left:491px;top:210.5px">静态IP</div>
<div class="td vl" style="left:648px;top:210.5px">Vlan1</div>
<div class="td mac" style="left:806px;top:210.5px">A4-56-02-54-B1-83</div>
<div class="td up" style="left:1041px;top:210.5px">0.02</div>
<div class="td dn" style="left:1198px;top:210.5px">0.00</div>
<div class="td tm" style="left:1355px;top:210.5px">10:39:47</div>
<svg class="abs" style="left:1512px;top:213px;width:14px;height:10px" viewBox="0 0 14 10"><path d="M0.7 9.4 C0.6 4 3.4 0.7 7 0.7 C10.6 0.7 13.4 4 13.3 9.4 Z" fill="rgba(255,255,255,.6)" stroke="#585858" stroke-width="1.25" stroke-linejoin="round"/><path d="M2.9 8 C2.9 4.6 4.8 2.9 7 2.9 C9.2 2.9 11.1 4.6 11.1 8" fill="none" stroke="#8a8a8a" stroke-width="1" stroke-dasharray="0.9 1.1"/><path d="M1.6 7.5 H2.9 M11.1 7.5 H12.4 M7 1.4 V3" stroke="#666" stroke-width="0.8"/><path d="M6.6 8.4 L9.1 4.4" stroke="#5a5a5a" stroke-width="1.5"/><circle cx="6.8" cy="8" r="1.1" fill="#666"/></svg>
<svg class="abs" style="left:1531px;top:213px;width:11px;height:11px" viewBox="0 0 11 11"><path d="M4.1 0.2 L5.4 0.2 L10.9 5.5 L5.4 10.8 L4.1 10.8 L4.1 8.7 L5.7 7 L0.1 7 L0.1 4 L5.7 4 L4.1 2.3 Z" fill="#2b2b2b"/></svg>
<div class="td ip" style="left:18px;top:244.5px">192.168.1.109</div>
<div class="td md" style="left:491px;top:244.5px">DHCP</div>
<div class="td vl" style="left:648px;top:244.5px">Vlan1</div>
<div class="td mac" style="left:806px;top:244.5px">04-42-1A-21-59-A1</div>
<div class="td up" style="left:1041px;top:244.5px">0.63</div>
<div class="td dn" style="left:1198px;top:244.5px">3.33</div>
<div class="td tm" style="left:1355px;top:244.5px">01:23:38</div>
<svg class="abs" style="left:1512px;top:247px;width:14px;height:10px" viewBox="0 0 14 10"><path d="M0.7 9.4 C0.6 4 3.4 0.7 7 0.7 C10.6 0.7 13.4 4 13.3 9.4 Z" fill="rgba(255,255,255,.6)" stroke="#585858" stroke-width="1.25" stroke-linejoin="round"/><path d="M2.9 8 C2.9 4.6 4.8 2.9 7 2.9 C9.2 2.9 11.1 4.6 11.1 8" fill="none" stroke="#8a8a8a" stroke-width="1" stroke-dasharray="0.9 1.1"/><path d="M1.6 7.5 H2.9 M11.1 7.5 H12.4 M7 1.4 V3" stroke="#666" stroke-width="0.8"/><path d="M6.6 8.4 L9.1 4.4" stroke="#5a5a5a" stroke-width="1.5"/><circle cx="6.8" cy="8" r="1.1" fill="#666"/></svg>
<svg class="abs" style="left:1531px;top:247px;width:11px;height:11px" viewBox="0 0 11 11"><path d="M4.1 0.2 L5.4 0.2 L10.9 5.5 L5.4 10.8 L4.1 10.8 L4.1 8.7 L5.7 7 L0.1 7 L0.1 4 L5.7 4 L4.1 2.3 Z" fill="#2b2b2b"/></svg>
<div class="td ip" style="left:18px;top:278.5px">192.168.1.112</div>
<div class="td md" style="left:491px;top:278.5px">静态IP</div>
<div class="td vl" style="left:648px;top:278.5px">Vlan1</div>
<div class="td mac" style="left:806px;top:278.5px">3C-06-A7-15-CC-ED</div>
<div class="td up" style="left:1041px;top:278.5px">0.69</div>
<div class="td dn" style="left:1198px;top:278.5px">8.64</div>
<div class="td tm" style="left:1355px;top:278.5px">00:35:36</div>
<svg class="abs" style="left:1512px;top:281px;width:14px;height:10px" viewBox="0 0 14 10"><path d="M0.7 9.4 C0.6 4 3.4 0.7 7 0.7 C10.6 0.7 13.4 4 13.3 9.4 Z" fill="rgba(255,255,255,.6)" stroke="#585858" stroke-width="1.25" stroke-linejoin="round"/><path d="M2.9 8 C2.9 4.6 4.8 2.9 7 2.9 C9.2 2.9 11.1 4.6 11.1 8" fill="none" stroke="#8a8a8a" stroke-width="1" stroke-dasharray="0.9 1.1"/><path d="M1.6 7.5 H2.9 M11.1 7.5 H12.4 M7 1.4 V3" stroke="#666" stroke-width="0.8"/><path d="M6.6 8.4 L9.1 4.4" stroke="#5a5a5a" stroke-width="1.5"/><circle cx="6.8" cy="8" r="1.1" fill="#666"/></svg>
<svg class="abs" style="left:1531px;top:281px;width:11px;height:11px" viewBox="0 0 11 11"><path d="M4.1 0.2 L5.4 0.2 L10.9 5.5 L5.4 10.8 L4.1 10.8 L4.1 8.7 L5.7 7 L0.1 7 L0.1 4 L5.7 4 L4.1 2.3 Z" fill="#2b2b2b"/></svg>
<div class="td ip" style="left:18px;top:313px">192.168.1.113</div>
<div class="td md" style="left:491px;top:313px">DHCP</div>
<div class="td vl" style="left:648px;top:313px">Vlan1</div>
<div class="td mac" style="left:806px;top:313px">24-FB-65-69-BD-62</div>
<div class="td up" style="left:1041px;top:313px">17.49</div>
<div class="td dn" style="left:1198px;top:313px">887.44</div>
<div class="td tm" style="left:1355px;top:313px">00:07:09</div>
<svg class="abs" style="left:1512px;top:315px;width:14px;height:10px" viewBox="0 0 14 10"><path d="M0.7 9.4 C0.6 4 3.4 0.7 7 0.7 C10.6 0.7 13.4 4 13.3 9.4 Z" fill="rgba(255,255,255,.6)" stroke="#585858" stroke-width="1.25" stroke-linejoin="round"/><path d="M2.9 8 C2.9 4.6 4.8 2.9 7 2.9 C9.2 2.9 11.1 4.6 11.1 8" fill="none" stroke="#8a8a8a" stroke-width="1" stroke-dasharray="0.9 1.1"/><path d="M1.6 7.5 H2.9 M11.1 7.5 H12.4 M7 1.4 V3" stroke="#666" stroke-width="0.8"/><path d="M6.6 8.4 L9.1 4.4" stroke="#5a5a5a" stroke-width="1.5"/><circle cx="6.8" cy="8" r="1.1" fill="#666"/></svg>
<svg class="abs" style="left:1531px;top:315px;width:11px;height:11px" viewBox="0 0 11 11"><path d="M4.1 0.2 L5.4 0.2 L10.9 5.5 L5.4 10.8 L4.1 10.8 L4.1 8.7 L5.7 7 L0.1 7 L0.1 4 L5.7 4 L4.1 2.3 Z" fill="#2b2b2b"/></svg>
<div class="td ip" style="left:18px;top:347.5px">192.168.1.122</div>
<div class="td nm" style="left:176px;top:347.5px">Microsoft Windows Vi...</div>
<div class="td md" style="left:491px;top:347.5px">DHCP</div>
<div class="td vl" style="left:648px;top:347.5px">Vlan1</div>
<div class="td mac" style="left:806px;top:347.5px">00-E0-4C-54-01-E0</div>
<div class="td up" style="left:1041px;top:347.5px">0.06</div>
<div class="td dn" style="left:1198px;top:347.5px">0.05</div>
<div class="td tm" style="left:1355px;top:347.5px">02:49:13</div>
<svg class="abs" style="left:1512px;top:350px;width:14px;height:10px" viewBox="0 0 14 10"><path d="M0.7 9.4 C0.6 4 3.4 0.7 7 0.7 C10.6 0.7 13.4 4 13.3 9.4 Z" fill="rgba(255,255,255,.6)" stroke="#585858" stroke-width="1.25" stroke-linejoin="round"/><path d="M2.9 8 C2.9 4.6 4.8 2.9 7 2.9 C9.2 2.9 11.1 4.6 11.1 8" fill="none" stroke="#8a8a8a" stroke-width="1" stroke-dasharray="0.9 1.1"/><path d="M1.6 7.5 H2.9 M11.1 7.5 H12.4 M7 1.4 V3" stroke="#666" stroke-width="0.8"/><path d="M6.6 8.4 L9.1 4.4" stroke="#5a5a5a" stroke-width="1.5"/><circle cx="6.8" cy="8" r="1.1" fill="#666"/></svg>
<svg class="abs" style="left:1531px;top:350px;width:11px;height:11px" viewBox="0 0 11 11"><path d="M4.1 0.2 L5.4 0.2 L10.9 5.5 L5.4 10.8 L4.1 10.8 L4.1 8.7 L5.7 7 L0.1 7 L0.1 4 L5.7 4 L4.1 2.3 Z" fill="#2b2b2b"/></svg>
<div class="td ip" style="left:18px;top:381.5px">192.168.1.128</div>
<div class="td md" style="left:491px;top:381.5px">静态IP</div>
<div class="td vl" style="left:648px;top:381.5px">Vlan1</div>
<div class="td mac" style="left:806px;top:381.5px">00-1C-12-C2-50-9D</div>
<div class="td up" style="left:1041px;top:381.5px">0.17</div>
<div class="td dn" style="left:1198px;top:381.5px">0.18</div>
<div class="td tm" style="left:1355px;top:381.5px">10:39:50</div>
<svg class="abs" style="left:1512px;top:384px;width:14px;height:10px" viewBox="0 0 14 10"><path d="M0.7 9.4 C0.6 4 3.4 0.7 7 0.7 C10.6 0.7 13.4 4 13.3 9.4 Z" fill="rgba(255,255,255,.6)" stroke="#585858" stroke-width="1.25" stroke-linejoin="round"/><path d="M2.9 8 C2.9 4.6 4.8 2.9 7 2.9 C9.2 2.9 11.1 4.6 11.1 8" fill="none" stroke="#8a8a8a" stroke-width="1" stroke-dasharray="0.9 1.1"/><path d="M1.6 7.5 H2.9 M11.1 7.5 H12.4 M7 1.4 V3" stroke="#666" stroke-width="0.8"/><path d="M6.6 8.4 L9.1 4.4" stroke="#5a5a5a" stroke-width="1.5"/><circle cx="6.8" cy="8" r="1.1" fill="#666"/></svg>
<svg class="abs" style="left:1531px;top:384px;width:11px;height:11px" viewBox="0 0 11 11"><path d="M4.1 0.2 L5.4 0.2 L10.9 5.5 L5.4 10.8 L4.1 10.8 L4.1 8.7 L5.7 7 L0.1 7 L0.1 4 L5.7 4 L4.1 2.3 Z" fill="#2b2b2b"/></svg>
<div class="td ip" style="left:18px;top:415.5px">192.168.1.130</div>
<div class="td nm s" style="left:176px;top:415.5px">LaCie NAS</div>
<div class="td md" style="left:491px;top:415.5px">DHCP</div>
<div class="td vl" style="left:648px;top:415.5px">Vlan1</div>
<div class="td mac" style="left:806px;top:415.5px">48-02-2A-80-79-86</div>
<div class="td up" style="left:1041px;top:415.5px">0.27</div>
<div class="td dn" style="left:1198px;top:415.5px">0.47</div>
<div class="td tm" style="left:1355px;top:415.5px">03:28:25</div>
<svg class="abs" style="left:1512px;top:418px;width:14px;height:10px" viewBox="0 0 14 10"><path d="M0.7 9.4 C0.6 4 3.4 0.7 7 0.7 C10.6 0.7 13.4 4 13.3 9.4 Z" fill="rgba(255,255,255,.6)" stroke="#585858" stroke-width="1.25" stroke-linejoin="round"/><path d="M2.9 8 C2.9 4.6 4.8 2.9 7 2.9 C9.2 2.9 11.1 4.6 11.1 8" fill="none" stroke="#8a8a8a" stroke-width="1" stroke-dasharray="0.9 1.1"/><path d="M1.6 7.5 H2.9 M11.1 7.5 H12.4 M7 1.4 V3" stroke="#666" stroke-width="0.8"/><path d="M6.6 8.4 L9.1 4.4" stroke="#5a5a5a" stroke-width="1.5"/><circle cx="6.8" cy="8" r="1.1" fill="#666"/></svg>
<svg class="abs" style="left:1531px;top:418px;width:11px;height:11px" viewBox="0 0 11 11"><path d="M4.1 0.2 L5.4 0.2 L10.9 5.5 L5.4 10.8 L4.1 10.8 L4.1 8.7 L5.7 7 L0.1 7 L0.1 4 L5.7 4 L4.1 2.3 Z" fill="#2b2b2b"/></svg>
<div class="td" id="foot" style="left:18px;top:454px">当前显示第1页，共7页。当前页共10条数据，已选中1。每页显示:</div>
<div class="abs" style="left:415px;top:453px;width:44px;height:22px;border:1px solid #a9a9a9;border-radius:2px;background:#fff"></div>
<div class="td" style="left:425px;top:456px">10</div>
<svg class="abs" style="left:444px;top:461px;width:10px;height:7px" viewBox="0 0 10 7"><path d="M1 1 L5 5.4 L9 1" fill="none" stroke="#222" stroke-width="1.8"/></svg>
<div class="pg" style="left:1433px;width:41px;color:#999;border-left:1px solid #ccc;letter-spacing:2px;text-indent:2px;font-size:13px;">&lt;&lt;</div>
<div class="pg" style="left:1474px;width:31px;color:#999;letter-spacing:2px;text-indent:2px;font-size:13px;">&lt;</div>
<div class="pg" style="left:1505px;width:28px;color:#fff;background:#2caccf;box-shadow:inset 0 0 0 0 #fff;">1</div>
<div class="pg" style="left:1533px;width:29px;color:#222;">2</div>
<div class="pg" style="left:1562px;width:29px;color:#222;">3</div>
<div class="pg" style="left:1591px;width:30px;color:#222;letter-spacing:2px;text-indent:2px;font-size:13px;">&gt;</div>
<div class="pg" style="left:1621px;width:42px;color:#222;letter-spacing:2px;text-indent:2px;font-size:13px;">&gt;&gt;</div>
</div>
<div class="abs" style="left:236px;top:382px;width:959px;height:111px;border:3px solid #ff0000"></div>
<div id="taskbar">
<div class="tint"></div>
<svg class="abs" style="left:6px;top:0px;width:42px;height:40px" viewBox="0 0 42 40"><defs><radialGradient id="orb" cx="50%" cy="30%" r="70%"><stop offset="0" stop-color="#9fd0f2"/><stop offset="0.55" stop-color="#2f78b8"/><stop offset="1" stop-color="#123a6a"/></radialGradient></defs><circle cx="21" cy="20" r="18.5" fill="url(#orb)" stroke="#0d2a4a" stroke-width="1"/><circle cx="21" cy="20" r="17.3" fill="none" stroke="#bfe0f5" stroke-width="0.9" opacity=".8"/><path d="M12 13.5 C15 12 17.5 12.5 19.5 14 L18 20 C16 18.6 13.6 18.4 10.6 19.8 Z" fill="#f25a22"/><path d="M21 14.6 C24 16.4 26.6 16 29.6 14.4 L28 20.4 C25 22 22.4 22 19.6 20.4 Z" fill="#8cc63e"/><path d="M10.2 21.4 C13.2 20 15.6 20.2 17.6 21.6 L16 27.6 C14 26.2 11.6 26 8.6 27.4 Z" fill="#2fa5e6"/><path d="M19.2 22 C22 23.6 24.6 23.6 27.6 22 L26 28 C23 29.6 20.4 29.4 17.6 28 Z" fill="#fbc416"/></svg>
<div class="tb" style="left:59px;width:422px"></div>
<div class="tb" style="left:484px;width:139px"></div>
<div class="tb" style="left:627px;width:139px"></div>
<div class="tb act" style="left:770px;width:139px"></div>
<div class="tb" style="left:913px;width:138px"></div>
<div class="tb" style="left:1055px;width:279px"></div>
<div class="tb" style="left:1338px;width:138px"></div>
<div class="tb" style="left:1480px;width:138px"></div>
<div class="abs" style="left:200px;top:4px;width:1px;height:33px;background:linear-gradient(180deg,rgba(255,255,255,0),rgba(255,255,255,.35),rgba(255,255,255,0))"></div>
<div class="abs" style="left:340px;top:4px;width:1px;height:33px;background:linear-gradient(180deg,rgba(255,255,255,0),rgba(255,255,255,.35),rgba(255,255,255,0))"></div>
<div class="abs" style="left:1195px;top:4px;width:1px;height:33px;background:linear-gradient(180deg,rgba(255,255,255,0),rgba(255,255,255,.35),rgba(255,255,255,0))"></div>
<svg class="abs" style="left:64px;top:3px;width:32px;height:33px" viewBox="0 0 32 33"><defs><linearGradient id="fo1" x1="0" y1="0" x2="0" y2="1"><stop offset="0" stop-color="#f6ecb6"/><stop offset="1" stop-color="#e6c867"/></linearGradient><linearGradient id="fo2" x1="0" y1="0" x2="1" y2="0"><stop offset="0" stop-color="#fbf3c8"/><stop offset="1" stop-color="#e9d27a"/></linearGradient></defs><path d="M6 1.5 L12.5 0.6 L14.4 2.4 V28.5 L11 32 L7.5 28.6 Z" fill="url(#fo2)" stroke="#cdb25a" stroke-width="0.5"/><path d="M11 4 L25.2 2.4 L26 4.8 V27 L12.8 31 L11 29 Z" fill="url(#fo1)" stroke="#cfb55e" stroke-width="0.5"/><path d="M24.8 20 L28 19.2 V26.8 L25 27.6 Z" fill="#f3e6a8" stroke="#c9ad55" stroke-width="0.4"/><rect x="25.8" y="21.5" width="1.2" height="4" fill="#fff"/></svg>
<div class="lbl" style="left:104px">01部门文件</div>
<svg class="abs" style="left:205px;top:3px;width:32px;height:33px" viewBox="0 0 32 33"><defs><linearGradient id="fo1" x1="0" y1="0" x2="0" y2="1"><stop offset="0" stop-color="#f6ecb6"/><stop offset="1" stop-color="#e6c867"/></linearGradient><linearGradient id="fo2" x1="0" y1="0" x2="1" y2="0"><stop offset="0" stop-color="#fbf3c8"/><stop offset="1" stop-color="#e9d27a"/></linearGradient></defs><path d="M6 1.5 L12.5 0.6 L14.4 2.4 V28.5 L11 32 L7.5 28.6 Z" fill="url(#fo2)" stroke="#cdb25a" stroke-width="0.5"/><path d="M11 4 L25.2 2.4 L26 4.8 V27 L12.8 31 L11 29 Z" fill="url(#fo1)" stroke="#cfb55e" stroke-width="0.5"/><path d="M24.8 20 L28 19.2 V26.8 L25 27.6 Z" fill="#f3e6a8" stroke="#c9ad55" stroke-width="0.4"/><rect x="25.8" y="21.5" width="1.2" height="4" fill="#fff"/></svg>
<div class="lbl" style="left:245px">10数据表</div>
<svg class="abs" style="left:345px;top:3px;width:32px;height:33px" viewBox="0 0 32 33"><defs><linearGradient id="fo1" x1="0" y1="0" x2="0" y2="1"><stop offset="0" stop-color="#f6ecb6"/><stop offset="1" stop-color="#e6c867"/></linearGradient><linearGradient id="fo2" x1="0" y1="0" x2="1" y2="0"><stop offset="0" stop-color="#fbf3c8"/><stop offset="1" stop-color="#e9d27a"/></linearGradient></defs><path d="M6 1.5 L12.5 0.6 L14.4 2.4 V28.5 L11 32 L7.5 28.6 Z" fill="url(#fo2)" stroke="#cdb25a" stroke-width="0.5"/><path d="M11 4 L25.2 2.4 L26 4.8 V27 L12.8 31 L11 29 Z" fill="url(#fo1)" stroke="#cfb55e" stroke-width="0.5"/><path d="M24.8 20 L28 19.2 V26.8 L25 27.6 Z" fill="#f3e6a8" stroke="#c9ad55" stroke-width="0.4"/><rect x="25.8" y="21.5" width="1.2" height="4" fill="#fff"/></svg>
<div class="lbl" style="left:385px">摄像机工具</div>
<svg class="abs" style="left:491px;top:3px;width:32px;height:34px" viewBox="0 0 32 34"><defs><radialGradient id="ieg" cx="40%" cy="30%" r="75%"><stop offset="0" stop-color="#8fe05e"/><stop offset="1" stop-color="#35a024"/></radialGradient></defs><circle cx="16" cy="18" r="12.5" fill="url(#ieg)" stroke="#2e8a1c" stroke-width="0.8"/><path d="M3 27 C-2 15 13 1 29 3.4 C21 5 9 12 7 29 Z" fill="#7bd64a" opacity=".9"/><text x="16.5" y="26" text-anchor="middle" font-family="Liberation Sans, sans-serif" font-weight="bold" font-size="24" fill="#fff">e</text><path d="M4 25 C2 14 14 3 27 4.6" fill="none" stroke="#fff" stroke-width="1.4" opacity=".9"/></svg>
<div class="lbl" style="left:527px">狗伤老人<span class="qr">”</span>事...</div>
<svg class="abs" style="left:635px;top:4px;width:32px;height:32px" viewBox="0 0 32 32"><path d="M16 1 L30 9 V23 L16 31 L2 23 V9 Z" fill="#e0232a"/><path d="M16 1 L30 9 L23 13 L16 9 L9 13 L2 9 Z" fill="#c4161d"/><path d="M2 23 L9 19 L16 23 L23 19 L30 23 L16 31 Z" fill="#b01218"/><path d="M16 9.5 L24 22.5 H8 Z" fill="#fff"/><path d="M16 15 L20 21.5 H12 Z" fill="#d81c23"/></svg>
<div class="lbl" style="left:671px">iVMS-4200</div>
<svg class="abs" style="left:779px;top:5px;width:30px;height:30px" viewBox="0 0 30 30"><circle cx="15" cy="15" r="14.5" fill="#db4437"/><path d="M15 15 L2.5 7.8 A14.5 14.5 0 0 0 15.5 29.5 L21.8 18.6 Z" fill="#0f9d58"/><path d="M15 15 L15.5 29.5 A14.5 14.5 0 0 0 27.5 7.8 L14.9 7.8 Z" fill="#ffcd40"/><path d="M2.5 7.8 A14.5 14.5 0 0 1 27.5 7.8 L15 7.8 L8.8 18.6 Z" fill="#db4437"/><circle cx="15" cy="15" r="6.8" fill="#fff"/><circle cx="15" cy="15" r="5.4" fill="#4285f4"/></svg>
<div class="lbl" style="left:814px">MER5200|上...</div>
<svg class="abs" style="left:924px;top:4px;width:26px;height:31px" viewBox="0 0 26 31"><path d="M3 1 H18 L24.5 7.5 V27 a3 3 0 0 1 -3 3 H3 a2.5 2.5 0 0 1 -2.5 -2.5 V3.5 A2.5 2.5 0 0 1 3 1 Z" fill="#fff" stroke="#e0241b" stroke-width="1.6"/><path d="M7 17 C11 14 13 9 12 6.5 C11 5 10 7 11 10 C12.5 14 16 16 19 16 C21 16 20 14.4 17.5 14.8 C13 15.5 9 17 7 19 C5.6 20.4 6 18 7 17 Z" fill="none" stroke="#e0241b" stroke-width="1.3"/><text x="12.5" y="27" text-anchor="middle" font-family="Liberation Sans, sans-serif" font-weight="bold" font-size="7.5" fill="#222">PDF</text></svg>
<div class="lbl" style="left:957px">关于召开<span class="ql">“</span>以...</div>
<svg class="abs" style="left:1063px;top:3px;width:32px;height:33px" viewBox="0 0 32 33"><defs><linearGradient id="np1" x1="0" y1="0" x2="1" y2="1"><stop offset="0" stop-color="#e4f5fb"/><stop offset="0.55" stop-color="#a9d6e8"/><stop offset="1" stop-color="#6fb0cf"/></linearGradient></defs><path d="M29 4.4 L30.6 6 L23.2 31.4 L21.4 30 Z" fill="#eef2f3" stroke="#b9c6cc" stroke-width="0.4"/><path d="M1.6 26.2 L21.4 30 L23.2 31.4 L3 27.8 Z" fill="#dfe7ea"/><path d="M9.8 1.8 L29 4.4 L21.4 30 L1.6 26.2 Z" fill="url(#np1)" stroke="#86b4c8" stroke-width="0.5"/><path d="M9.8 1.8 L29 4.4 L28.2 7 L9 4.4 Z" fill="#5b8296"/><path d="M11 1.2 V4.4 M13.6 1.6 V4.8 M16.2 2 V5.2 M18.8 2.3 V5.5 M21.4 2.7 V5.9 M24 3 V6.2 M26.6 3.4 V6.6" stroke="#e8f0f3" stroke-width="0.9"/><path d="M7.6 10 L25.6 13 M6.4 14 L24.4 17 M5.2 18 L23.2 21 M4 22 L22 25" stroke="#ffffff" stroke-width="0.7" opacity=".55"/></svg>
<div class="lbl" style="left:1101px"><span class="ql">“</span>狗伤老人<span class="qr">”</span>...</div>
<svg class="abs" style="left:1202px;top:3px;width:32px;height:33px" viewBox="0 0 32 33"><defs><linearGradient id="np1" x1="0" y1="0" x2="1" y2="1"><stop offset="0" stop-color="#e4f5fb"/><stop offset="0.55" stop-color="#a9d6e8"/><stop offset="1" stop-color="#6fb0cf"/></linearGradient></defs><path d="M29 4.4 L30.6 6 L23.2 31.4 L21.4 30 Z" fill="#eef2f3" stroke="#b9c6cc" stroke-width="0.4"/><path d="M1.6 26.2 L21.4 30 L23.2 31.4 L3 27.8 Z" fill="#dfe7ea"/><path d="M9.8 1.8 L29 4.4 L21.4 30 L1.6 26.2 Z" fill="url(#np1)" stroke="#86b4c8" stroke-width="0.5"/><path d="M9.8 1.8 L29 4.4 L28.2 7 L9 4.4 Z" fill="#5b8296"/><path d="M11 1.2 V4.4 M13.6 1.6 V4.8 M16.2 2 V5.2 M18.8 2.3 V5.5 M21.4 2.7 V5.9 M24 3 V6.2 M26.6 3.4 V6.6" stroke="#e8f0f3" stroke-width="0.9"/><path d="M7.6 10 L25.6 13 M6.4 14 L24.4 17 M5.2 18 L23.2 21 M4 22 L22 25" stroke="#ffffff" stroke-width="0.7" opacity=".55"/></svg>
<div class="lbl" style="left:1240px">mac2021120...</div>
<svg class="abs" style="left:1345px;top:4px;width:32px;height:32px" viewBox="0 0 32 32"><rect x="9" y="9" width="22" height="20" fill="#f4f8f4" stroke="#7aa87a" stroke-width="0.8" transform="rotate(8 20 19)"/><path d="M12 15 L30 18 M11 20 L29 23 M11 25 L28 28 M18 11 L15 29 M24 12 L21 30" stroke="#9cc79c" stroke-width="0.9"/><rect x="1" y="2" width="19" height="19" rx="2" fill="#2f8f3b" stroke="#cfe8cf" stroke-width="1"/><text x="10.5" y="17.5" text-anchor="middle" font-family="Liberation Sans, sans-serif" font-weight="bold" font-size="17" fill="#fff">X</text></svg>
<div class="lbl" style="left:1382px;letter-spacing:0.4px">Microsoft Ex...</div>
<svg class="abs" style="left:1486px;top:3px;width:34px;height:36px" viewBox="0 0 34 36"><rect x="2" y="1.5" width="11.5" height="9.5" fill="#1c3fb4" stroke="#e6ecf6" stroke-width="1.3"/><path d="M3 2.5 H12.5 L3 7.5 Z" fill="#3f6fe0" opacity=".8"/><rect x="5.5" y="11.7" width="4.5" height="1.8" fill="#c9ced8"/><rect x="17.5" y="1.5" width="11.5" height="9.5" fill="#1c3fb4" stroke="#e6ecf6" stroke-width="1.3"/><path d="M18.5 2.5 H28.0 L18.5 7.5 Z" fill="#3f6fe0" opacity=".8"/><rect x="21.0" y="11.7" width="4.5" height="1.8" fill="#c9ced8"/><rect x="4" y="14.5" width="11.5" height="9.5" fill="#1c3fb4" stroke="#e6ecf6" stroke-width="1.3"/><path d="M5 15.5 H14.5 L5 20.5 Z" fill="#3f6fe0" opacity=".8"/><rect x="7.5" y="24.7" width="4.5" height="1.8" fill="#c9ced8"/><rect x="19.5" y="14.5" width="11.5" height="9.5" fill="#1c3fb4" stroke="#e6ecf6" stroke-width="1.3"/><path d="M20.5 15.5 H30.0 L20.5 20.5 Z" fill="#3f6fe0" opacity=".8"/><rect x="23.0" y="24.7" width="4.5" height="1.8" fill="#c9ced8"/><path d="M4 31.6 L26 30" stroke="#2fae3a" stroke-width="2.6"/><circle cx="5" cy="31.6" r="2.6" fill="#7ddc63"/><path d="M12 34 L24 28.6" stroke="#d4dede" stroke-width="1.8"/><circle cx="26" cy="30" r="2" fill="#d8e0e0"/></svg>
<div class="lbl" style="left:1524px">网络和共享中心</div>
<svg class="abs" style="left:1630px;top:11px;width:17px;height:16px" viewBox="0 0 17 16"><path d="M6 0.5 C6 3 11 2 11 4.5" fill="none" stroke="#cfd8e2" stroke-width="0.9"/><rect x="0.6" y="4.6" width="15.8" height="9.8" rx="1" fill="#8ea2b8" stroke="#dfe7ef" stroke-width="0.9"/><path d="M2.5 7 H14.5 M2.5 9.4 H14.5 M4.5 12 H12.5" stroke="#e9eff5" stroke-width="1" stroke-dasharray="1.4 0.8"/></svg>
<svg class="abs" style="left:1661px;top:12px;width:17px;height:17px" viewBox="0 0 17 17"><rect x="0.5" y="0.5" width="16" height="16" rx="3.5" fill="#f4511e"/><path d="M4 4 L13 8 L8 9.6 L10.6 14 L4 9.4 Z" fill="#fff"/></svg>
<svg class="abs" style="left:1685px;top:12px;width:17px;height:17px" viewBox="0 0 17 17"><circle cx="8.5" cy="8.5" r="8" fill="#f7d417" stroke="#b9a010" stroke-width="0.7"/><path d="M8.5 4 V13 M4 8.5 H13" stroke="#2e9a2e" stroke-width="2.6"/></svg>
<svg class="abs" style="left:1709px;top:11px;width:19px;height:18px" viewBox="0 0 19 18"><rect x="0.5" y="2" width="15" height="12" fill="#1c1c1c"/><path d="M2.5 8 C5 4.5 9 4.5 12 6.4 C9.6 6 6.6 6.4 5 8.6 C6.4 10.6 9.4 10.8 12.6 9 C10 12.4 5 12 2.5 8 Z" fill="#76b900"/><circle cx="13.6" cy="13" r="3.6" fill="#eee" stroke="#555" stroke-width="0.8"/><circle cx="13.6" cy="13" r="1.3" fill="#555"/></svg>
<svg class="abs" style="left:1732px;top:10px;width:20px;height:20px" viewBox="0 0 20 20"><path d="M4 2.4 C2.2 8.6 7 14 14.6 12.6 Z" fill="#eee" stroke="#111" stroke-width="1.2"/><path d="M4 2.4 C8.6 3 13.4 7.6 14.6 12.6 C16.4 9 11 2 4 2.4 Z" fill="#111"/><path d="M8 9 L11.4 5.6" stroke="#222" stroke-width="1.1"/><path d="M7.6 13.4 L4.6 18.6 H12.4 L10.4 13.6 Z" fill="#2a2a2a"/><circle cx="5.4" cy="15.4" r="1.6" fill="#ddd" stroke="#333" stroke-width="0.6"/></svg>
<svg class="abs" style="left:1758px;top:12px;width:16px;height:16px" viewBox="0 0 18 18"><path d="M9 1.4 L15.8 5.2 V12.8 L9 16.6 L2.2 12.8 V5.2 Z" fill="none" stroke="#e0121a" stroke-width="2.8"/><path d="M8 0 L12 6.4 M0.6 14 L6.8 11.4" stroke="#1f4d84" stroke-width="1.5"/></svg>
<svg class="abs" style="left:1780px;top:10px;width:20px;height:20px" viewBox="0 0 20 20"><rect x="6" y="4.6" width="12" height="9" fill="#20456e" stroke="#fff" stroke-width="1.3"/><path d="M9 17.5 H16 M12.5 14 V17.5" stroke="#fff" stroke-width="1.3"/><rect x="1.6" y="1" width="4.4" height="6" fill="#fff"/><path d="M3.8 7 V16 H8" fill="none" stroke="#fff" stroke-width="1.2"/></svg>
<svg class="abs" style="left:1805px;top:11px;width:18px;height:17px" viewBox="0 0 18 17"><path d="M1 6 H4.4 L9 1.6 V15.4 L4.4 11 H1 Z" fill="#fff" stroke="#c8d4e0" stroke-width="0.5"/><path d="M11 5.6 C12.4 7.2 12.4 9.8 11 11.4 M13 3.6 C15.4 6.2 15.4 10.8 13 13.4 M15 1.8 C18.2 5.4 18.2 11.6 15 15.2" fill="none" stroke="#fff" stroke-width="1.1"/></svg>
<div class="lbl" style="left:1827px;top:3px;width:80px;text-align:center;text-shadow:none">10:36</div>
<div class="lbl" style="left:1827px;top:21px;width:80px;text-align:center;text-shadow:none;letter-spacing:0.5px">2021/12/8</div>
<div class="abs" style="left:1906px;top:0;width:14px;height:40px;border-left:1px solid rgba(10,30,60,.8);background:linear-gradient(180deg,rgba(255,255,255,.35),rgba(255,255,255,.08) 50%,rgba(255,255,255,.18));box-shadow:inset 1px 0 0 rgba(255,255,255,.4)"></div>
</div>
</body>
</html>
